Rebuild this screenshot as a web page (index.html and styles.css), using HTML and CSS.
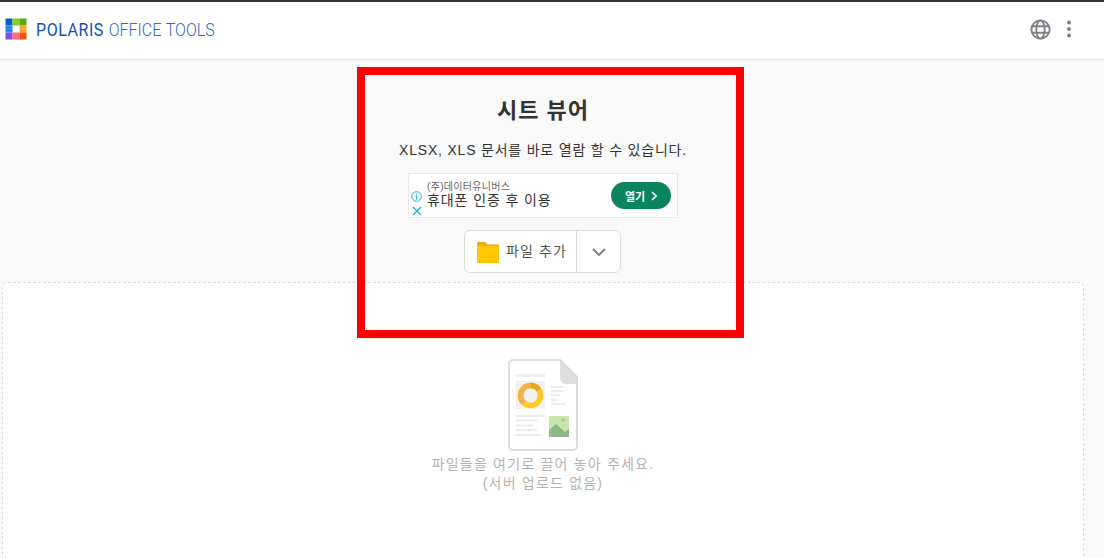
FILE: index.html
```html
<!DOCTYPE html>
<html lang="ko">
<head>
    <meta charset="UTF-8">
    <title>시트 뷰어</title>
    <link rel="stylesheet" href="styles.css">
</head>
<body>
    <header class="topbar">
        <div class="logo">
            <svg class="logo-mark" width="22" height="22" viewBox="0 0 22 22">
                <rect width="22" height="22" rx="1.500" fill="#fff"/>
                <rect x="0.500" y="0.500" width="7" height="7" fill="#0a5cc4"/>
                <rect x="7.500" y="0.500" width="7" height="7" fill="#86cf24"/>
                <rect x="14.500" y="0.500" width="7" height="7" fill="#5fa80e"/>
                <rect x="0.500" y="7.500" width="7" height="7" fill="#2288f4"/>
                <rect x="14.500" y="7.500" width="7" height="7" fill="#ffa52c"/>
                <rect x="0.500" y="14.500" width="7" height="7" fill="#7c4fe0"/>
                <rect x="7.500" y="14.500" width="7" height="7" fill="#ff6f78"/>
                <rect x="14.500" y="14.500" width="7" height="7" fill="#fb4f05"/>
            </svg>
            <span class="logo-text"><span class="logo-strong">POLARIS</span> OFFICE TOOLS</span>
        </div>
        <div class="topbar-icons">
            <svg width="21" height="21" viewBox="0 0 22 22" fill="none" stroke="#7b8087" stroke-width="1.900">
                <circle cx="11" cy="11" r="9.600"/>
                <ellipse cx="11" cy="11" rx="4.400" ry="9.600"/>
                <path d="M2.200 7.600H19.800M2.200 14.400H19.800"/>
            </svg>
            <svg width="6" height="18" viewBox="0 0 6 18" fill="#7b8087">
                <circle cx="3" cy="2.500" r="2"/>
                <circle cx="3" cy="9" r="2"/>
                <circle cx="3" cy="15.500" r="2"/>
            </svg>
        </div>
    </header>

    <main class="content">
        <h1 class="title">시트 뷰어</h1>
        <p class="subtitle">XLSX, XLS 문서를 바로 열람 할 수 있습니다.</p>

        <div class="ad">
            <div class="ad-icons">
                <svg width="11" height="11" viewBox="0 0 11 11" fill="none" stroke="#1fb6d6">
                    <circle cx="5.500" cy="5.500" r="4.800"/>
                    <path d="M5.500 4.600V8.400M5.500 2.400V3.600" stroke-width="1.300"/>
                </svg>
                <svg width="10" height="10" viewBox="0 0 10 10" fill="none" stroke="#1fb6d6" stroke-width="1.400">
                    <path d="M1 1L9 9M9 1L1 9"/>
                </svg>
            </div>
            <div class="ad-text">
                <div class="ad-company">(주)데이터유니버스</div>
                <div class="ad-headline">휴대폰 인증 후 이용</div>
            </div>
            <div class="ad-open">
                열기
                <svg width="6" height="10" viewBox="0 0 6 10" fill="none" stroke="#fff" stroke-width="1.600">
                    <path d="M1 1L5 5L1 9"/>
                </svg>
            </div>
        </div>

        <div class="add-file">
            <div class="add-file-main">
                <svg width="22" height="22" viewBox="0 0 22 22">
                    <path d="M0 2.500A1.500 1.500 0 0 1 1.500 1H8L10.500 3.500H22V6H0Z" fill="#eda912"/>
                    <path d="M0 5H20.500A1.500 1.500 0 0 1 22 6.500V20.500A1.500 1.500 0 0 1 20.500 22H1.500A1.500 1.500 0 0 1 0 20.500Z" fill="#ffc800"/>
                </svg>
                <span class="add-file-label">파일 추가</span>
            </div>
            <div class="add-file-more">
                <svg width="14" height="8" viewBox="0 0 14 8" fill="none" stroke="#7b7b7b" stroke-width="1.800">
                    <path d="M1 1L7 7L13 1"/>
                </svg>
            </div>
        </div>

        <section class="dropzone">
            <svg class="doc" width="70" height="92" viewBox="0 0 70 92">
                <path d="M5 1H52L69 18V87A4 4 0 0 1 65 91H5A4 4 0 0 1 1 87V5A4 4 0 0 1 5 1Z" fill="#fff" stroke="#dcdcdc" stroke-width="2"/>
                <path d="M52 1L69 18V25H58A6 6 0 0 1 52 19Z" fill="#dedede"/>
                <rect x="8" y="15" width="29" height="3" fill="#efefef"/>
                <rect x="8" y="22" width="29" height="28" fill="#f2f2f2"/>
                <circle cx="22.500" cy="36.500" r="10" fill="none" stroke="#ffca28" stroke-width="5.500"/>
                <path d="M22.500 26.500A10 10 0 0 0 16 44" fill="none" stroke="#f0b14e" stroke-width="5.500"/>
                <path d="M22.500 26.500A10 10 0 0 1 31 31" fill="none" stroke="#e8a51e" stroke-width="5.500"/>
                <path d="M43 28H55M43 32H55M43 36H52M43 41H50M43 45H58" stroke="#e6e6e6" stroke-width="1.600"/>
                <path d="M8 57H37M8 61.500H29M8 66.500H25M8 71H29M8 76H33" stroke="#e6e6e6" stroke-width="1.600"/>
                <rect x="41" y="57" width="20" height="21" rx="1" fill="#c8e6ab"/>
                <circle cx="55" cy="61" r="1.700" fill="#a3cf8a"/>
                <path d="M41 78V71L48 65L57 73L61 70V78Z" fill="#8dbb86"/>
            </svg>
            <p class="drop-text">파일들을 여기로 끌어 놓아 주세요.<br>(서버 업로드 없음)</p>
        </section>
    </main>

    <div class="highlight"></div>
</body>
</html>
```

FILE: styles.css
```css
html, body {
    height: 100%;
}
body {
    margin: 0;
    overflow: hidden;
    background: #f9f9f9;
    font-family: "Liberation Sans", Arial, "Noto Sans CJK KR", sans-serif;
    color: #333;
}
.topbar {
    height: 54px;
    border-top: 2px solid #333;
    border-bottom: 1px solid #e6e6e6;
    background: #fff;
    display: flex;
    justify-content: space-between;
    align-items: center;
    padding: 0 32px 3px 5px;
}
.logo {
    display: flex;
    align-items: center;
    gap: 9px;
}
/* the real logotype is narrower than any installed font */
.logo-text {
    font-family: Roboto, sans-serif;
    font-size: 18px;
    font-weight: 300;
    word-spacing: 1px;
    color: #2f68cc;
    transform: scaleX(0.89);
    transform-origin: left center;
}
.logo-strong {
    color: #1450b4;
    font-weight: 400;
    letter-spacing: 0.6px;
}
.topbar-icons {
    display: flex;
    align-items: center;
    gap: 15px;
}
.content {
    display: flex;
    flex-direction: column;
    align-items: center;
    padding: 0 20px 0 2px;
}
.title {
    font-size: 22px;
    line-height: 30px;
    letter-spacing: 1px;
    margin: 36px 0 0;
    color: #333;
}
.subtitle {
    font-size: 14px;
    line-height: 20px;
    letter-spacing: 0.8px;
    margin: 14px 0 0;
    color: #333;
}
.ad {
    width: 260px;
    height: 43px;
    margin: 13px 0 0;
    background: #fff;
    border: 1px solid #e8e8e8;
    display: flex;
    align-items: center;
    padding: 0 6px 0 2px;
}
.ad-icons {
    display: flex;
    flex-direction: column;
    align-items: center;
    gap: 4px;
    margin-top: 16px;
}
.ad-text {
    flex: 1;
    margin: 0 0 2px 5px;
}
.ad-company {
    font-size: 10px;
    line-height: 11px;
    letter-spacing: 0.3px;
    color: #666;
}
.ad-headline {
    font-size: 14px;
    line-height: 17px;
    letter-spacing: 0.9px;
    color: #333;
}
.ad-open {
    width: 60px;
    height: 27px;
    border-radius: 14px;
    background: #0a8560;
    color: #fff;
    font-size: 11px;
    font-weight: bold;
    display: flex;
    align-items: center;
    justify-content: center;
    gap: 6px;
}
.add-file {
    display: flex;
    height: 41px;
    width: 155px;
    margin: 12px 1px 0 0;
    background: #fff;
    border: 1px solid #dcdcdc;
    border-radius: 6px;
}
.add-file-main {
    width: 112px;
    border-right: 1px solid #dcdcdc;
    display: flex;
    align-items: center;
    gap: 7px;
    padding-left: 12px;
    box-sizing: border-box;
    font-size: 14px;
    color: #555;
}
.add-file-label {
    letter-spacing: 1.1px;
    margin-bottom: 3px;
}
.add-file-more {
    flex: 1;
    display: flex;
    align-items: center;
    justify-content: center;
}
.dropzone {
    align-self: stretch;
    height: 300px;
    margin-top: 9px;
    background: #fff;
    border: 1px dashed #dcdcdc;
    border-radius: 6px;
    display: flex;
    flex-direction: column;
    align-items: center;
    padding-top: 76px;
}
.drop-text {
    margin: 4px 0 0;
    font-size: 14px;
    line-height: 19px;
    letter-spacing: 1.2px;
    color: #b3b3b3;
    text-align: center;
}
.highlight {
    position: absolute;
    left: 357px;
    top: 67px;
    width: 371px;
    height: 255px;
    border: 8px solid #ff0000;
}
```
